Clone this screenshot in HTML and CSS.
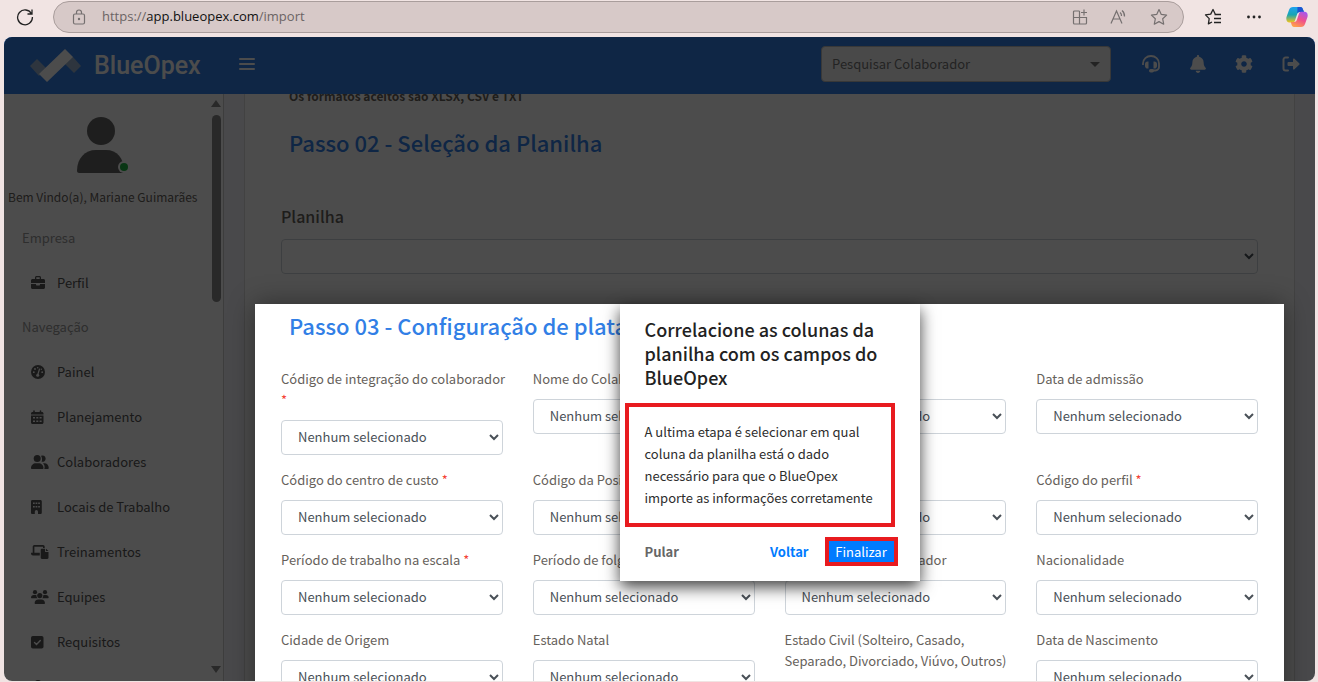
FILE: index.html
```html
<!DOCTYPE html>
<html lang="pt-BR">
	<head>
		<meta charset="UTF-8" />
		<meta name="viewport" content="width=device-width, initial-scale=1.0" />
		<title>BlueOpex - Importação</title>
		<link rel="stylesheet" href="styles.css">
	</head>
	<body>
		<div class="browser-bar">
			<button class="browser-btn" aria-label="Recarregar">
				<svg width="18" height="18" viewBox="0 0 18 18"><path d="M15.6 6A7.4 7.4 0 1 0 16.4 9M16 1.5V6h-4.500" fill="none" stroke="#222" stroke-width="1.300"/></svg>
			</button>
			<div class="address">
				<svg width="14" height="16" viewBox="0 0 14 16" fill="none" stroke="#757070" stroke-width="1.200"><rect x="1.500" y="5" width="11" height="10" rx="1.500"/><path d="M4.500 5V3.500a2.500 2.500 0 0 1 5 0V5"/><circle cx="7" cy="10" r="0.600" fill="#757070"/></svg>
				<span class="url">https://<b>app.blueopex.com</b>/import</span>
				<button class="browser-btn" aria-label="Aplicativos">
					<svg width="16" height="16" viewBox="0 0 16 16" fill="none" stroke="#757070" stroke-width="1.200"><path d="M7.500 2H2.500a1 1 0 0 0-1 1v11a1 1 0 0 0 1 1h11a1 1 0 0 0 1-1V8.500h-13M7.500 2v13M12 .5v6M9 3.500h6"/></svg>
				</button>
				<button class="browser-btn" aria-label="Ler em voz alta">
					<svg width="18" height="16" viewBox="0 0 18 16" fill="none" stroke="#757070" stroke-width="1.200"><path d="M1 14.500L6.500 2 12 14.500M3 10h7M10 3.500a4 4 0 0 1 1.500 3.500M12 1.500a7 7 0 0 1 2.500 6"/></svg>
				</button>
				<button class="browser-btn" aria-label="Favorito">
					<svg width="18" height="18" viewBox="0 0 18 18" fill="none" stroke="#757070" stroke-width="1.200" stroke-linejoin="round"><path d="M9 1.500l2.300 4.900 5.300.7-3.900 3.700 1 5.400L9 13.600l-4.700 2.600 1-5.400L1.400 7.100l5.300-.7z"/></svg>
				</button>
			</div>
			<button class="browser-btn" aria-label="Favoritos">
				<svg width="18" height="18" viewBox="0 0 18 18" fill="none" stroke="#222" stroke-width="1.300" stroke-linejoin="round"><path d="M11.800 6.500l-.5-.2L9 1.500 6.700 6.100l-5.200.8 3.700 3.700-.8 5.300L8 14M10.500 6.500h6.500M10 10.500h7M10 14.500h7"/></svg>
			</button>
			<button class="browser-btn" aria-label="Mais">
				<svg width="16" height="16" viewBox="0 0 16 16" fill="#222"><circle cx="2.500" cy="8" r="1.400"/><circle cx="8" cy="8" r="1.400"/><circle cx="13.500" cy="8" r="1.400"/></svg>
			</button>
			<button class="browser-btn" aria-label="Copilot">
				<svg width="22" height="22" viewBox="0 0 22 22">
					<defs>
						<linearGradient id="cool" x1="0" y1="0" x2="0" y2="1"><stop offset="0" stop-color="#1fa2f0"/><stop offset=".5" stop-color="#18a5b4"/><stop offset="1" stop-color="#f5c518"/></linearGradient>
						<linearGradient id="warm" x1="0.800" y1="0" x2="0.300" y2="1"><stop offset="0" stop-color="#a457f0"/><stop offset=".5" stop-color="#f0508c"/><stop offset="1" stop-color="#ffa04a"/></linearGradient>
					</defs>
					<path d="M7 1h7.500c1.500 0 2 1 2.500 2.500L18 6h-4c-2 0-2.500 1-3 2.500l-2 6c-.6 1.800-1.500 2-3 2H3.500C1 16.500-.2 14 .5 11L3 4C3.600 2 5 1 7 1z" fill="url(#cool)"/>
					<path d="M11.500 1h3c1.500 0 2 1 2.500 2.500L18 6h-4c-1.500 0-2.200.6-2.700 1.600z" fill="#1d55d0"/>
					<path d="M15 21H8c-1.500 0-2-1-2.500-2.500L4.800 16H8c2 0 2.500-1 3-2.500l2-6C13.600 6 14.500 5.800 16 5.800h2.500c2.500 0 3.700 2.200 3 5.200L19 18c-.6 2-2 3-4 3z" fill="url(#warm)"/>
				</svg>
			</button>
		</div>

		<div class="app">
			<header class="topbar">
				<a class="logo" href="#">
					<svg width="52" height="34" viewBox="0 0 52 34"><path d="M0 17l7-7 9 9-7 8z" fill="#9ab3cf"/><path d="M35 9l8-1 8 9-7 7-9-9z" fill="#9ab3cf"/><path d="M9 25L35 0l8 8-26 25z" fill="#fff"/></svg>
					<span>BlueOpex</span>
				</a>
				<button class="icon-btn" aria-label="Menu">
					<svg width="16" height="14" viewBox="0 0 16 14" stroke="#fff" stroke-width="2" stroke-linecap="round"><path d="M1 2h14M1 7h14M1 12h14"/></svg>
				</button>
				<div class="search">
					<select aria-label="Pesquisar Colaborador">
						<option>Pesquisar Colaborador</option>
					</select>
				</div>
				<nav class="actions">
					<a href="#" aria-label="Suporte"><svg width="20" height="18" viewBox="0 0 20 18"><path d="M2 10V8.500a8 7.500 0 0 1 16 0V12a3.500 3.500 0 0 1-3.500 3.500H11" fill="none" stroke="#fff" stroke-width="1.800"/><path d="M7.500 6.500v7H6.800A2.800 2.800 0 0 1 4 10.700V9.300a2.800 2.800 0 0 1 2.800-2.800zM12.500 6.500v7h.7a2.800 2.800 0 0 0 2.800-2.800V9.300a2.800 2.800 0 0 0-2.800-2.800z" fill="#fff"/><rect x="8" y="14" width="5" height="3.500" rx="1.700" fill="#fff"/></svg></a>
					<a href="#" aria-label="Notificações"><svg width="16" height="18" viewBox="0 0 448 512" fill="#fff"><path d="M224 512c35.320 0 63.970-28.650 63.970-64H160.030c0 35.350 28.650 64 63.970 64zm215.390-149.710c-19.320-20.760-55.470-51.990-55.470-154.290 0-77.700-54.480-139.900-127.940-155.160V32c0-17.670-14.320-32-31.980-32s-31.980 14.330-31.980 32v20.840C118.560 68.100 64.080 130.300 64.080 208c0 102.300-36.150 133.530-55.470 154.290-6 6.450-8.660 14.160-8.610 21.710.11 16.400 12.980 32 32.100 32h383.800c19.120 0 32-15.600 32.100-32 .05-7.550-2.610-15.270-8.610-21.710z"/></svg></a>
					<a href="#" aria-label="Configurações"><svg width="18" height="18" viewBox="0 0 512 512" fill="#fff"><path d="M487.400 315.700l-42.600-24.600c4.300-23.200 4.300-47 0-70.200l42.600-24.600c4.900-2.800 7.100-8.600 5.500-14-11.100-35.600-30-67.800-54.700-94.600-3.800-4.100-10-5.100-14.800-2.300L380.800 110c-17.900-15.400-38.500-27.300-60.800-35.100V25.800c0-5.600-3.900-10.500-9.400-11.700-36.700-8.200-74.300-7.800-109.200 0-5.500 1.200-9.400 6.100-9.400 11.700V75c-22.200 7.900-42.800 19.800-60.800 35.100L88.700 85.500c-4.900-2.800-11-1.900-14.800 2.300-24.700 26.700-43.600 58.900-54.700 94.600-1.700 5.400.6 11.200 5.500 14L67.300 221c-4.300 23.200-4.300 47 0 70.200l-42.600 24.600c-4.900 2.800-7.100 8.600-5.500 14 11.100 35.600 30 67.800 54.700 94.600 3.800 4.100 10 5.100 14.800 2.300l42.600-24.600c17.900 15.400 38.500 27.300 60.800 35.100v49.200c0 5.600 3.900 10.500 9.400 11.700 36.700 8.200 74.300 7.800 109.200 0 5.500-1.200 9.400-6.100 9.400-11.700v-49.200c22.200-7.900 42.800-19.800 60.800-35.100l42.600 24.600c4.900 2.800 11 1.900 14.800-2.300 24.700-26.700 43.600-58.900 54.700-94.600 1.500-5.500-.7-11.300-5.600-14.100zM256 336c-44.100 0-80-35.900-80-80s35.900-80 80-80 80 35.900 80 80-35.900 80-80 80z"/></svg></a>
					<a href="#" aria-label="Sair"><svg width="18" height="16" viewBox="0 0 18 16"><path d="M6 1.500H3.500a2 2 0 0 0-2 2v9a2 2 0 0 0 2 2H6" fill="none" stroke="#fff" stroke-width="2" stroke-linecap="round"/><path d="M11 3v3H6.500a1 1 0 0 0-1 1v2a1 1 0 0 0 1 1H11v3c0 .6.700.8 1.200.4l5-4.600a1 1 0 0 0 0-1.500l-5-4.700C11.700 2.200 11 2.400 11 3z" fill="#fff"/></svg></a>
				</nav>
			</header>

			<div class="layout">
				<aside class="sidebar">
					<div class="sidebar-content">
						<div class="profile">
							<svg width="56" height="58" viewBox="0 0 56 58"><circle cx="28" cy="15" r="14" fill="#666"/><path d="M4 55c0-13 8-21 19-21h10c11 0 18 8 18 21 0 1-1 2-2 2H6c-1 0-2-1-2-2z" fill="#666"/><circle cx="51" cy="51" r="6" fill="#fff"/><circle cx="51" cy="51" r="4" fill="#1fb544"/></svg>
							<p>Bem Vindo(a), Mariane Guimarães</p>
						</div>
						<h3>Empresa</h3>
						<ul>
							<li><a href="#"><svg width="18" height="14" viewBox="0 0 18 14" fill="#555"><path d="M4 3V1.500C4 .7 4.700 0 5.500 0h3c.8 0 1.500.7 1.500 1.500V3h2.500c.8 0 1.500.7 1.500 1.500V7H0V4.500C0 3.700.7 3 1.500 3zm1.300 0h3.400V1.300H5.300zM0 8h5v.500c0 .5.400 1 1 1h2c.6 0 1-.5 1-1V8h5v3.500c0 .8-.7 1.500-1.500 1.500h-11C.7 13 0 12.300 0 11.500z"/></svg>Perfil</a></li>
						</ul>
						<h3>Navegação</h3>
						<ul>
							<li><a href="#"><svg width="18" height="14" viewBox="0 0 18 14"><circle cx="7" cy="7" r="7" fill="#555"/><path d="M6.700 10L8.500 4" stroke="#fff" stroke-width="1.200" stroke-linecap="round"/><g fill="#fff"><circle cx="6.700" cy="10.300" r="1.500"/><circle cx="2.800" cy="7.200" r=".9"/><circle cx="4" cy="4" r=".9"/><circle cx="6.700" cy="2.700" r=".8"/><circle cx="11.200" cy="7.200" r=".9"/><circle cx="10.300" cy="4.200" r=".7"/></g></svg>Painel</a></li>
							<li><a href="#"><svg width="18" height="14" viewBox="0 0 18 14"><path d="M3 1v2M9.500 1v2" stroke="#555" stroke-width="1.600" stroke-linecap="round"/><path d="M0 3.500C0 2.700.7 2 1.500 2H11c.8 0 1.500.7 1.500 1.500V4.500H0zM0 5.400h12.500v7.100c0 .8-.7 1.500-1.500 1.500H1.500C.7 14 0 13.300 0 12.500z" fill="#555"/><path d="M2 7h2v1.500H2zM5.300 7h2v1.500h-2zM8.600 7h2v1.500h-2zM2 10.500h2V12H2zM5.300 10.500h2V12h-2zM8.600 10.500h2V12h-2z" fill="#fff"/></svg>Planejamento</a></li>
							<li><a href="#"><svg width="18" height="14" viewBox="0 0 18 14" fill="#555"><circle cx="6.200" cy="3.500" r="3.500"/><path d="M0 13c0-2.700 2.200-4.800 4.900-4.800h2.700c2.700 0 4.900 2.100 4.900 4.800 0 .6-.4 1-1 1H1c-.6 0-1-.4-1-1zM10 .8a3.200 3.200 0 1 1 .5 5.900c.8-1.200.8-4-.5-5.900zM12 8.200h1.500c2.400 0 4.200 2 4.200 4.400v.4c0 .6-.4 1-.9 1h-3.500c.7-2.200.2-4.200-1.300-5.800z"/></svg>Colaboradores</a></li>
							<li><a href="#"><svg width="18" height="14" viewBox="0 0 18 14"><path d="M1.300 0h8.200c.7 0 1.300.6 1.300 1.300v11.400c0 .7-.6 1.300-1.300 1.300H7v-2.300a1.600 1.600 0 0 0-3.200 0V14H1.300C.6 14 0 13.400 0 12.700V1.300C0 .6.600 0 1.300 0z" fill="#555"/><path d="M2 2.500h1.700V4H2zM4.600 2.500h1.700V4H4.600zM7.200 2.500h1.700V4H7.200zM2 6h1.700v1.500H2zM4.600 6h1.700v1.500H4.600zM7.200 6h1.700v1.500H7.200z" fill="#fff"/></svg>Locais de Trabalho</a></li>
							<li><a href="#"><svg width="18" height="14" viewBox="0 0 18 14" fill="#555"><path d="M1.700 1.700C1.700.8 2.500 0 3.400 0H12c1 0 1.700.8 1.700 1.700V3H12V1.700H3.400v6.100h5.400v2.800H2A2 2 0 0 1 0 8.600V7.800h1.700zM9.700 5c0-.7.500-1.200 1.200-1.200h3.200V7h3.400v5.800c0 .7-.5 1.200-1.200 1.200h-5.400c-.7 0-1.200-.5-1.200-1.200zM15 3.800L17.500 6H15z"/></svg>Treinamentos</a></li>
							<li><a href="#"><svg width="18" height="14" viewBox="0 0 18 14" fill="#555"><circle cx="4" cy="2.200" r="2.100"/><circle cx="14" cy="2.200" r="2.100"/><circle cx="8.800" cy="5.600" r="2.600"/><path d="M0 7.600c0-1.500 1.200-2.600 2.600-2.600h1.600c.5 0 .9.100 1.300.3-.2 1.100.2 2.200 1 3H.600c-.3 0-.6-.3-.6-.7zM17.700 7.600c0-1.500-1.200-2.600-2.600-2.600h-1.600c-.5 0-.9.100-1.300.3.200 1.100-.2 2.200-1 3h5.900c.3 0 .6-.3.600-.7zM3.600 13.200c0-2 1.600-3.700 3.600-3.700h3.200c2 0 3.600 1.700 3.600 3.700 0 .4-.3.800-.8.800H4.400c-.5 0-.8-.4-.8-.8z"/></svg>Equipes</a></li>
							<li><a href="#"><svg width="18" height="14" viewBox="0 0 18 14"><rect y="1" width="12.500" height="12.500" rx="1.800" fill="#555"/><path d="M3.500 7.500l2 2 3.800-4" fill="none" stroke="#fff" stroke-width="1.400" stroke-linecap="round"/></svg>Requisitos</a></li>
							<li><a href="#" aria-label="Usuários"><svg width="18" height="14" viewBox="0 0 18 14" fill="#555"><circle cx="7" cy="3.500" r="3.500"/><path d="M1 14c0-3 2-5 5-5h2c3 0 5 2 5 5z"/></svg></a></li>
						</ul>
					</div>
					<div class="scrollbar">
						<span class="arrow up"></span>
						<span class="thumb"></span>
						<span class="arrow down"></span>
					</div>
				</aside>

				<main class="main">
					<div class="card">
						<p class="formats">Os formatos aceitos são XLSX, CSV e TXT</p>
						<h2>Passo 02 - Seleção da Planilha</h2>
						<div class="sheet">
							<label for="planilha">Planilha</label>
							<select id="planilha"><option></option></select>
						</div>

						<section class="stage">
							<h2>Passo 03 - Configuração de plataforma</h2>
							<form class="fields">
								<div class="field"><label for="f1">Código de integração do colaborador <i>*</i></label><select id="f1"><option>Nenhum selecionado</option></select></div>
								<div class="field"><label for="f2">Nome do Colaborador <i>*</i></label><select id="f2"><option>Nenhum selecionado</option></select></div>
								<div class="field"><label for="f3">E-mail</label><select id="f3"><option>Nenhum selecionado</option></select></div>
								<div class="field"><label for="f4">Data de admissão</label><select id="f4"><option>Nenhum selecionado</option></select></div>
								<div class="field"><label for="f5">Código do centro de custo <i>*</i></label><select id="f5"><option>Nenhum selecionado</option></select></div>
								<div class="field"><label for="f6">Código da Posição <i>*</i></label><select id="f6"><option>Nenhum selecionado</option></select></div>
								<div class="field"><label for="f7">Código <i>*</i></label><select id="f7"><option>Nenhum selecionado</option></select></div>
								<div class="field"><label for="f8">Código do perfil <i>*</i></label><select id="f8"><option>Nenhum selecionado</option></select></div>
								<div class="field"><label for="f9">Período de trabalho na escala <i>*</i></label><select id="f9"><option>Nenhum selecionado</option></select></div>
								<div class="field"><label for="f10">Período de folga na escala <i>*</i></label><select id="f10"><option>Nenhum selecionado</option></select></div>
								<div class="field"><label for="f11">Identidade do colaborador</label><select id="f11"><option>Nenhum selecionado</option></select></div>
								<div class="field"><label for="f12">Nacionalidade</label><select id="f12"><option>Nenhum selecionado</option></select></div>
								<div class="field"><label for="f13">Cidade de Origem</label><select id="f13"><option>Nenhum selecionado</option></select></div>
								<div class="field"><label for="f14">Estado Natal</label><select id="f14"><option>Nenhum selecionado</option></select></div>
								<div class="field"><label for="f15">Estado Civil (Solteiro, Casado, Separado, Divorciado, Viúvo, Outros)</label><select id="f15"><option>Nenhum selecionado</option></select></div>
								<div class="field"><label for="f16">Data de Nascimento</label><select id="f16"><option>Nenhum selecionado</option></select></div>
							</form>

							<div class="popover" role="dialog" aria-labelledby="tour-title">
								<h4 id="tour-title">Correlacione as colunas da planilha com os campos do BlueOpex</h4>
								<p>A ultima etapa é selecionar em qual coluna da planilha está o dado necessário para que o BlueOpex importe as informações corretamente</p>
								<div class="popover-footer">
									<button class="skip">Pular</button>
									<button class="back">Voltar</button>
									<button class="finish">Finalizar</button>
								</div>
							</div>
						</section>
					</div>
				</main>
			</div>
		</div>
	</body>
</html>
```
FILE: styles.css
```css
* {
	box-sizing: border-box;
}
body {
	margin: 0;
	height: 100vh;
	display: flex;
	flex-direction: column;
	overflow: hidden;
	background-color: #f1e4e3;
	font-family: 'Noto Sans CJK SC', 'Noto Sans', sans-serif;
	font-size: 13px;
	line-height: 21px;
	color: #66615b;
}
h2, h3, h4, p, ul {
	margin: 0;
	padding: 0;
}
svg {
	display: block;
	flex: none;
}
a {
	color: inherit;
	text-decoration: none;
}
button, select {
	font: inherit;
}
button {
	background: none;
	border: none;
	padding: 0;
	cursor: pointer;
}

/* browser */
.browser-bar {
	flex: none;
	height: 37px;
	padding: 0 10px 4px 16px;
	display: flex;
	align-items: center;
	gap: 24px;
}
.address {
	flex: 1;
	height: 32px;
	margin: 0 -4px 0 -5px;
	padding: 0 15px 0 18px;
	display: flex;
	align-items: center;
	gap: 22px;
	background-color: #d7c9c8;
	border: 1px solid #a99d9c;
	border-radius: 16px;
}
.url {
	flex: 1;
	margin-left: -6px;
	font-family: 'Open Sans', sans-serif;
	color: #6b6464;
}
.url b {
	font-weight: 400;
	color: #111;
}

/* app */
.app {
	flex: 1;
	min-height: 0;
	margin: 0 3px 1px 4px;
	display: flex;
	flex-direction: column;
	overflow: hidden;
	border-radius: 8px;
	background-color: #f4f6fc;
}
.topbar {
	position: relative;
	z-index: 1;
	flex: none;
	height: 57px;
	padding: 0 15px 3px 26px;
	display: flex;
	align-items: center;
	background-color: #327fe6;
}
.logo {
	display: flex;
	align-items: center;
	gap: 12px;
	width: 209px;
	padding-top: 3px;
	font-family: Roboto, sans-serif;
	font-size: 25px;
	font-weight: 500;
	line-height: 30px;
	color: #fff;
}
.icon-btn {
	margin-right: auto;
}
.search {
	position: relative;
	width: 290px;
	margin-right: 30px;
}
.search select {
	appearance: none;
	width: 100%;
	height: 36px;
	padding: 0 10px 2px;
	background-color: #f5f5f5;
	border: 1px solid #bbb;
	border-radius: 4px;
	color: #777;
}
.search::after {
	content: '';
	position: absolute;
	right: 11px;
	top: 16px;
	border: 5px solid transparent;
	border-top-color: #777;
	border-bottom: none;
}
.actions {
	display: flex;
	align-items: center;
	gap: 29px;
}

.layout {
	flex: 1;
	min-height: 0;
	display: flex;
}
.sidebar {
	flex: none;
	width: 220px;
	display: flex;
	overflow: hidden;
	background-color: #fff;
	border-right: 1px solid #ccc;
}
.sidebar-content {
	flex: 1;
	min-width: 0;
}
.profile {
	padding: 22px 0 9px;
}
.profile svg {
	margin: 0 auto 12px 69px;
}
.profile p {
	padding-left: 4px;
	font-size: 12px;
	white-space: nowrap;
}
.sidebar h3 {
	padding-left: 18px;
	font-size: 13px;
	font-weight: 400;
	line-height: 44px;
	color: #999;
}
.sidebar ul {
	list-style: none;
}
.sidebar li a {
	display: flex;
	align-items: center;
	gap: 8px;
	height: 45px;
	padding-left: 27px;
	color: #555;
}
.scrollbar {
	flex: none;
	width: 14px;
	padding: 6px 0 8px;
	display: flex;
	flex-direction: column;
	align-items: center;
}
.arrow {
	border: 5px solid transparent;
}
.up {
	border-top: none;
	border-bottom: 7px solid #8b8b8b;
}
.down {
	margin-top: auto;
	border-bottom: none;
	border-top: 7px solid #8b8b8b;
}
.thumb {
	width: 9px;
	height: 187px;
	margin-top: 8px;
	background-color: #8b8b8b;
	border-radius: 5px;
}

.main {
	flex: 1;
	padding: 0 20px;
}
.card {
	padding: 0 10px;
	background-color: #fff;
	border: 1px solid #ddd;
	border-top: none;
}
.formats {
	margin-top: -9px;
	padding-left: 34px;
	font-size: 12px;
	font-weight: 700;
}
.card h2 {
	padding-left: 34px;
	font-size: 22px;
	font-weight: 500;
	line-height: 30px;
	color: #327fe6;
}
.formats + h2 {
	margin-top: 21px;
}
.sheet {
	margin: 47px 0 30px;
	padding: 0 26px;
}
.sheet label {
	display: block;
	margin-bottom: 11px;
	font-size: 16px;
	font-weight: 500;
	line-height: 24px;
}
.card select {
	width: 100%;
	height: 35px;
	padding: 0 12px 2px;
	background-color: #fff;
	border: 1px solid #ced4da;
	border-radius: 4px;
	color: #495057;
}

/* highlighted step of the tour, its shadow dims everything else */
.stage {
	position: relative;
	z-index: 2;
	padding: 6px 0 20px;
	background-color: #fff;
	box-shadow: 0 0 25px rgba(0, 0, 0, 0.4), 0 0 0 5000px rgba(0, 0, 0, 0.7);
}
.fields {
	display: grid;
	grid-template-columns: repeat(4, 1fr);
	align-items: start;
	gap: 14px 30px;
	padding: 28px 26px 0;
}
.field label {
	display: block;
	margin: 0 -8px 10px 0;
}
.field i {
	font-style: normal;
	color: #f44336;
}
.popover {
	position: absolute;
	top: 0;
	left: calc(50% - 150px);
	width: 300px;
	padding: 13px 0 15px;
	background-color: #fff;
	box-shadow: 0 6px 15px rgba(0, 0, 0, 0.75);
	color: #2d2d2d;
}
.popover h4 {
	padding: 0 20px 0 25px;
	font-size: 18px;
	font-weight: 500;
	line-height: 24px;
	color: #222;
}
.popover p {
	margin: 14px 25px 10px 5px;
	padding: 14px 10px 14px 16px;
	border: 4px solid #e81b1f;
	line-height: 22px;
}
.popover-footer {
	display: flex;
	align-items: center;
	padding: 0 22px 0 25px;
}
.skip {
	margin-right: auto;
	font-weight: 700;
	color: #666;
}
.back {
	margin-right: 16px;
	font-weight: 700;
	color: #007bff;
}
.finish {
	width: 73px;
	height: 29px;
	background-color: #007bff;
	border: 4px solid #e81b1f;
	color: #fff;
}
```
